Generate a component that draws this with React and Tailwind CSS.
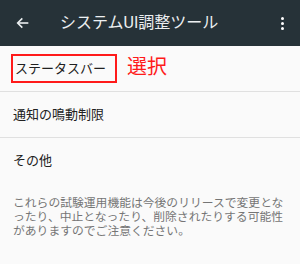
const FONT = { fontFamily: '"Roboto", "Noto Sans CJK JP", sans-serif' }

function BackArrow() {
  return (
    <svg width="16" height="16" viewBox="0 0 24 24" fill="none" stroke="currentColor" strokeWidth="2.4">
      <path d="M20 12H5" />
      <path d="M11 5l-7 7 7 7" />
    </svg>
  )
}

export default function App() {
  return (
    <div className="w-[300px] h-[264px] bg-[#fafafa] overflow-hidden" style={FONT}>
      <div className="h-[46px] bg-[#263238] flex items-center text-[#eceff1]">
        <div className="w-[60px] pl-[15px] flex items-center">
          <BackArrow />
        </div>
        <div className="flex-1 text-[16px]">システムUI調整ツール</div>
        <div className="w-[38px] flex flex-col items-center gap-[2px] pl-[2px]">
          <span className="w-[3px] h-[3px] bg-white rounded-full" />
          <span className="w-[3px] h-[3px] bg-white rounded-full" />
          <span className="w-[3px] h-[3px] bg-white rounded-full" />
        </div>
      </div>

      <div className="h-[46px] flex items-center pl-[11px] border-b border-[#e0e0e0]">
        <div className="h-[29px] w-[106px] border-2 border-[#ff1a1a] flex items-center pl-[2px] text-[13px] text-[#212121]">
          ステータスバー
        </div>
        <span className="ml-[10px] text-[20px] text-[#ff1a1a] -mt-[3px]">選択</span>
      </div>

      <div className="h-[46px] flex items-center pl-[13px] border-b border-[#e0e0e0] text-[13px] text-[#212121]">
        通知の鳴動制限
      </div>

      <div className="h-[46px] flex items-center pl-[13px] text-[13px] text-[#212121]">
        その他
      </div>

      <p className="mt-[12px] pl-[13px] pr-[10px] text-[11.8px] leading-[14px] text-[#757575]">
        これらの試験運用機能は今後のリリースで変更となったり、中止となったり、削除されたりする可能性がありますのでご注意ください。
      </p>
    </div>
  )
}
